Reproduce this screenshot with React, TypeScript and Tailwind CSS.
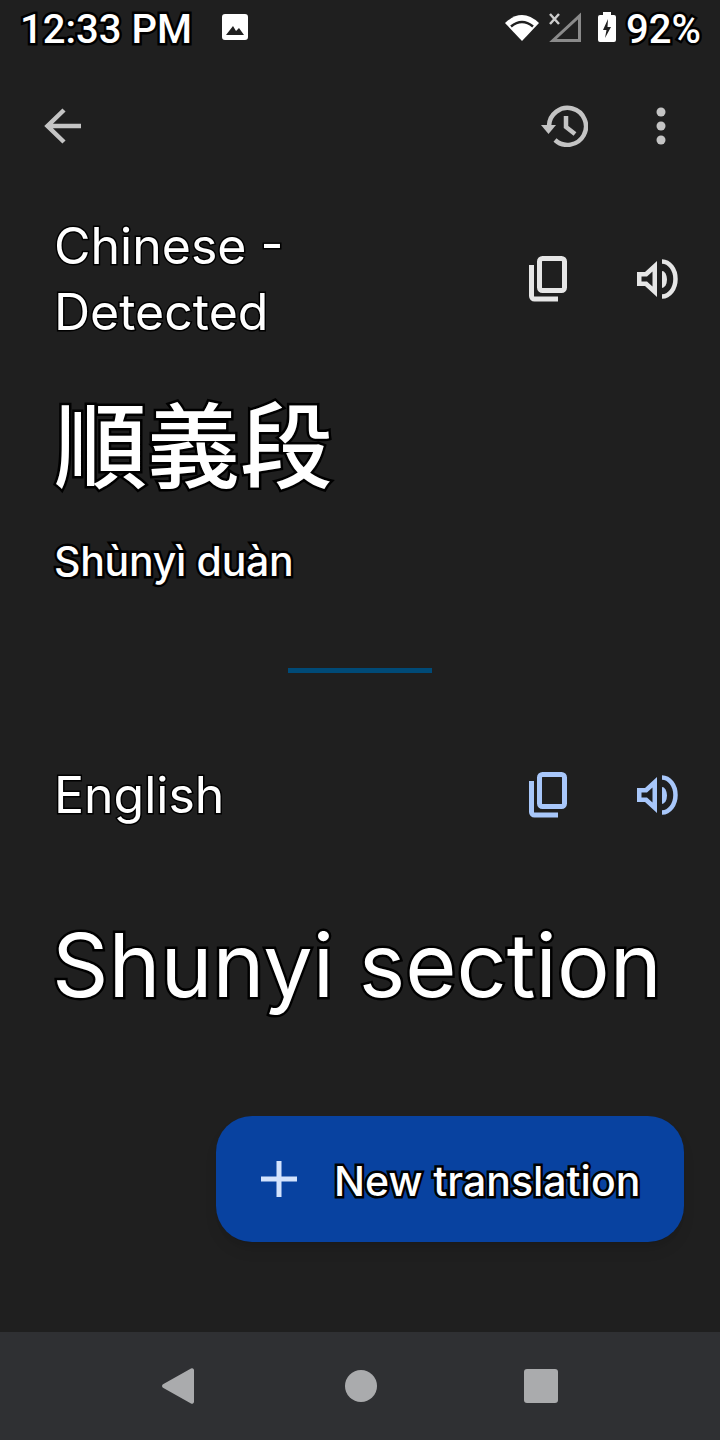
const outline = '[paint-order:stroke_fill] [-webkit-text-stroke:5px_#000]';

function CopyIcon({ color }: { color: string }) {
  return (
    <svg width="40" height="46" viewBox="0 0 40 46" fill="none" stroke={color} strokeWidth="5">
      <rect x="11.500" y="2.500" width="25" height="32" rx="3" />
      <path d="M3.500 9V40a3 3 0 0 0 3 3H30" />
    </svg>
  );
}

function SpeakerIcon({ color }: { color: string }) {
  return (
    <svg width="42" height="40" viewBox="0 0 42 40" fill="none">
      <path d="M0 13h8L20 2v36L8 27H0zM4.500 17.500v5H10l5.500 5v-15L10 17.500z" fill={color} fillRule="evenodd" />
      <path d="M25 12a5 8.500 0 0 1 0 17z" fill={color} />
      <path d="M25 2.500A13.500 17.500 0 0 1 25 37.500" stroke={color} strokeWidth="4.500" />
    </svg>
  );
}

function LangHeader({ label, color }: { label: string; color: string }) {
  return (
    <div className="flex items-center justify-between">
      <div className="w-[300px] text-[50px] leading-[66px] text-white font-['Inter',sans-serif] [paint-order:stroke_fill] [-webkit-text-stroke:3px_#000]">
        {label}
      </div>
      <div className="flex gap-[69px] mr-[41px] items-center">
        <CopyIcon color={color} />
        <SpeakerIcon color={color} />
      </div>
    </div>
  );
}

export default function App() {
  return (
    <div className="w-[720px] h-[1440px] bg-[#1f1f1f] flex flex-col font-['Roboto',sans-serif]">
      <div className="h-[60px] flex items-center justify-between pl-[20px] pr-[19px] text-white text-[40px]">
        <div className="flex items-center gap-[30px]">
          <span className={`font-medium ${outline}`}>12:33 PM</span>
          <svg width="26" height="26" viewBox="0 0 26 26" className="-mt-[6px]">
            <path d="M3 0h20a3 3 0 0 1 3 3v20a3 3 0 0 1-3 3H3a3 3 0 0 1-3-3V3a3 3 0 0 1 3-3zM4 21h18l-5-7-3 3-3-5-7 9z" fill="#fff" fillRule="evenodd" />
          </svg>
        </div>
        <div className="flex items-center">
          <div className="flex items-center -mt-[6px]">
            <svg width="34" height="28" viewBox="0 0 34 28" className="mr-[10px]">
              <path d="M17 28L0 10Q17-6 34 10z" fill="#fff" />
              <path d="M6 13.500Q17 4.500 28 13.500" fill="none" stroke="#1f1f1f" strokeWidth="2.500" />
            </svg>
            <svg width="32" height="30" viewBox="0 0 32 30" className="mr-[17px]">
              <path d="M30.500 4v24.500H4z" fill="none" stroke="#8a8a8a" strokeWidth="3" />
              <path d="M1 2l9 10M10 2l-9 10" stroke="#ccc" strokeWidth="2.500" />
            </svg>
            <svg width="18" height="30" viewBox="0 0 18 30" className="mr-[10px]">
              <path d="M5 0h8v3h3a2 2 0 0 1 2 2v23a2 2 0 0 1-2 2H2a2 2 0 0 1-2-2V5a2 2 0 0 1 2-2h3z" fill="#fff" />
              <path d="M10 7l-5 11h3.500L7 26l6-11H9.500z" fill="#1f1f1f" />
            </svg>
          </div>
          <span className={`font-medium ${outline}`}>92%</span>
        </div>
      </div>

      <div className="h-[92px] flex items-center justify-between pl-[44px] pr-[51px] mt-[20px]">
        <svg width="38" height="38" viewBox="0 0 38 38" fill="none" stroke="#c4c4c4" strokeWidth="4.500">
          <path d="M37 19H4M20 3L3.500 19 20 35" />
        </svg>
        <div className="flex items-center gap-[65px]">
          <svg width="48" height="42" viewBox="0 0 48 42" fill="none" stroke="#c4c4c4" strokeWidth="4.500">
            <path d="M9 21a18.500 18.500 0 1 1 6 14" />
            <path d="M1 20h15l-7.500 9z" fill="#c4c4c4" stroke="none" />
            <path d="M26 11v11l9 7" />
          </svg>
          <svg width="16" height="38" viewBox="0 0 16 38" fill="#c4c4c4">
            <circle cx="8" cy="5" r="4.500" />
            <circle cx="8" cy="19" r="4.500" />
            <circle cx="8" cy="33" r="4.500" />
          </svg>
        </div>
      </div>

      <div className="pl-[54px] mt-[41px]">
        <LangHeader label="Chinese - Detected" color="#e6e6e6" />
        <div className={`mt-[40px] h-[112px] text-[93px] leading-[112px] font-medium text-white font-['Noto_Sans_CJK_TC',sans-serif] ${outline}`}>
          順義段
        </div>
        <div className={`mt-[39px] text-[41px] leading-[50px] font-medium tracking-[-0.3px] text-white font-['Inter',sans-serif] ${outline}`}>
          Shùnyì duàn
        </div>
      </div>

      <div className="self-center mt-[82px] w-[144px] h-[5px] bg-[#004a77]" />

      <div className="pl-[54px] mt-[89px]">
        <LangHeader label="English" color="#a8c7fa" />
        <div className={`-ml-[2px] mt-[87px] text-[88px] leading-[100px] text-white font-['Inter',sans-serif] whitespace-nowrap ${outline}`}>
          Shunyi section
        </div>
      </div>

      <div className="self-end mr-[36px] mt-[101px] w-[468px] h-[126px] rounded-[36px] bg-[#0842a0] shadow-lg flex items-center pl-[44px]">
        <svg width="38" height="38" viewBox="0 0 38 38" stroke="#d3e3fd" strokeWidth="5">
          <path d="M19 1v36M1 19h36" />
        </svg>
        <span className={`ml-[36px] pt-[6px] text-[41px] font-medium text-white font-['Inter',sans-serif] ${outline}`}>New translation</span>
      </div>

      <div className="mt-auto h-[108px] bg-[#2f3033] flex items-center pl-[162px]">
        <svg width="32" height="36" viewBox="0 0 32 36" className="mr-[151px]">
          <path d="M29 .5 1 16.300a2 2 0 0 0 0 3.400L29 35.500a2 2 0 0 0 3-1.700V2.200a2 2 0 0 0-3-1.700z" fill="#aaabad" />
        </svg>
        <div className="w-[32px] h-[32px] rounded-full bg-[#aaabad] mr-[147px]" />
        <div className="w-[34px] h-[34px] rounded-[3px] bg-[#aaabad]" />
      </div>
    </div>
  );
}
